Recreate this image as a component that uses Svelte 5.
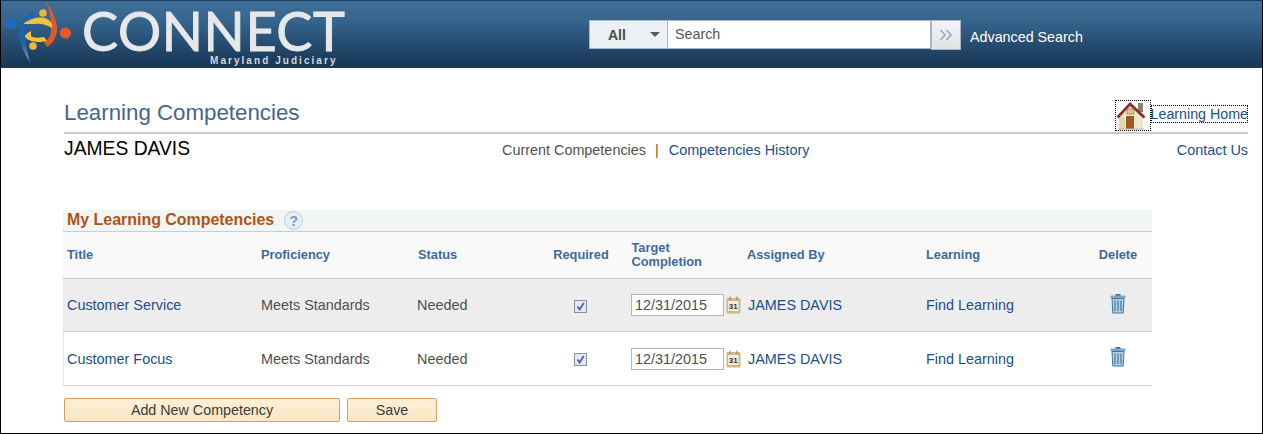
<script>
  const rows = [
    { title: 'Customer Service', tone: 'odd' },
    { title: 'Customer Focus', tone: 'even' }
  ];
</script>

<div class="frame">
  <header class="banner">
    <div class="logo">
      <svg class="mark" width="74" height="64" viewBox="1 1 74 64" aria-hidden="true">
        <defs>
          <linearGradient id="swoosh" x1="0" y1="0" x2="0" y2="1">
            <stop offset="0" stop-color="#1f66b5"/>
            <stop offset="0.65" stop-color="#1f5fa6"/>
            <stop offset="1" stop-color="#8fa6bc"/>
          </linearGradient>
        </defs>
        <circle cx="11" cy="23.5" r="6" fill="#2468b8"/>
        <path d="M30 62 C22 50 17 38 19 28 C22 20 27 14 33 11 L34 17 C30 19 27 24 26 30 C25 42 27 52 30 62Z" fill="url(#swoosh)"/>
        <path d="M46 2 C54 12 58 24 57 32 C55 40 52 44 47 47 L44 42 C48 40 50 37 51 32 C52 22 50 12 46 2Z" fill="#e0592a"/>
        <circle cx="65.5" cy="33" r="5.5" fill="#e35a26"/>
        <circle cx="43" cy="13" r="3.8" fill="#f0b53f"/>
        <path d="M23 24 C30 18 40 16 47 19 C51 21 53 24 52 28 C47 25 41 23 35 24 C31 24 27 24 23 24Z" fill="#f3c23a"/>
        <circle cx="33" cy="46" r="3.8" fill="#f0b53f"/>
        <path d="M31 31 C27 33 25 35 25 37 C28 41 34 42 40 42 L47 41 L44 37 C38 38 33 38 31 36Z" fill="#f3c23a"/>
      </svg>
      <div class="wordmark">
        <span class="connect">CONNECT</span>
        <span class="judiciary">Maryland Judiciary</span>
      </div>
    </div>
    <div class="search">
      <div class="scope"><b>All</b><i class="caret"></i></div>
      <div class="field">Search</div>
      <div class="go">
        <svg width="14" height="12" viewBox="0 0 14 12" aria-hidden="true"><path d="M1.5 1 L6 6 L1.5 11 M7.5 1 L12 6 L7.5 11" fill="none" stroke="#8fa9c4" stroke-width="1.5"/></svg>
      </div>
      <a class="advanced" href="#a">Advanced Search</a>
    </div>
  </header>

  <main class="page">
    <div class="heading">
      <h1>Learning Competencies</h1>
      <div class="home">
        <span class="focus icon">
          <svg width="34" height="29" viewBox="0 0 34 29" aria-hidden="true">
            <rect x="22" y="2" width="5" height="9" fill="#8c8270"/>
            <path d="M3 15 L14 4 L27 15 V28 H3Z" fill="#efe6cf"/>
            <path d="M3 16 H9 V28 H3Z" fill="#e2d6b8"/>
            <path d="M0.5 15.5 L14 1 L29.5 15.5 L27.5 17.5 L14 5 L2.5 17.5Z" fill="#8f2f27"/>
            <rect x="10" y="15" width="8" height="13" fill="#9b5a1e"/>
            <rect x="11" y="8" width="7" height="5" fill="#dcc888" stroke="#8a7a50" stroke-width=".7"/>
            <rect x="2" y="27.5" width="26" height="1" fill="#b9ad92"/>
          </svg>
        </span>
        <a class="focus" href="#h">Learning Home</a>
      </div>
    </div>

    <div class="subnav">
      <div class="person">JAMES DAVIS</div>
      <nav>
        <span class="current">Current Competencies</span>
        <span class="sep">|</span>
        <a href="#c">Competencies History</a>
      </nav>
      <a class="contact" href="#u">Contact Us</a>
    </div>

    <section class="grid">
      <div class="caption">
        <h2>My Learning Competencies</h2>
        <span class="help">?</span>
      </div>
      <table>
        <colgroup>
          <col class="c1" /><col class="c2" /><col class="c3" /><col class="c4" />
          <col class="c5" /><col class="c6" /><col class="c7" /><col class="c8" />
        </colgroup>
        <thead>
          <tr>
            <th>Title</th>
            <th>Proficiency</th>
            <th class="statush">Status</th>
            <th class="center req">Required</th>
            <th class="target">Target<br />Completion</th>
            <th>Assigned By</th>
            <th>Learning</th>
            <th class="center del">Delete</th>
          </tr>
        </thead>
        <tbody>
          {#each rows as row}
            <tr class={row.tone}>
              <td><a href="#t">{row.title}</a></td>
              <td>Meets Standards</td>
              <td>Needed</td>
              <td class="center reqcell"><span class="check">
                <svg width="9" height="9" viewBox="0 0 9 9" aria-hidden="true"><path d="M1.5 4.5 L3.6 7.5 L7.8 1" fill="none" stroke="#4a63a8" stroke-width="1.8"/></svg>
              </span></td>
              <td>
                <div class="date">
                  <span class="dateinput">12/31/2015</span>
                  <svg width="15" height="18" viewBox="0 0 15 18" aria-hidden="true">
                    <rect x="0.5" y="2" width="14" height="15.5" rx="1" fill="#cdb98a"/>
                    <rect x="2" y="5" width="10.5" height="10" fill="#f6efd8"/>
                    <path d="M4 0.5 V4 M11 0.5 V4" stroke="#8e7d55" stroke-width="1"/>
                    <text x="7.2" y="13" text-anchor="middle" class="calnum">31</text>
                  </svg>
                </div>
              </td>
              <td class="assigned"><a href="#b">JAMES DAVIS</a></td>
              <td><a href="#l">Find Learning</a></td>
              <td class="center del">
                <svg class="trash" width="16" height="21" viewBox="0 0 16 21" aria-hidden="true">
                  <path d="M5.5 1 H10.5 V3 H5.5Z" fill="#3a6f9c"/>
                  <rect x="0.5" y="2.5" width="15" height="3" rx="1" fill="#7ea6c6"/>
                  <path d="M2 5.5 H14 L13.2 20 H2.8Z" fill="#b4cee2" stroke="#3f77a4" stroke-width="1"/>
                  <path d="M5 7.5 V18 M8 7.5 V18 M11 7.5 V18" stroke="#4a80ab" stroke-width="1.3"/>
                </svg>
              </td>
            </tr>
          {/each}
        </tbody>
      </table>
    </section>

    <div class="actions">
      <button class="wide">Add New Competency</button>
      <button class="save">Save</button>
    </div>
  </main>
</div>

<style>
  :global(body) {
    margin: 0;
    background: #fff;
  }
  .frame {
    width: 1263px;
    height: 434px;
    box-sizing: border-box;
    border-left: 1px solid #000;
    border-right: 1px solid #000;
    border-bottom: 1px solid #000;
    font-family: "Liberation Sans", Arial, sans-serif;
    font-size: 14.4px;
    color: #4f4f4f;
  }
  a {
    color: #1a4f8c;
    text-decoration: none;
  }
  .banner {
    height: 68px;
    box-sizing: border-box;
    border-top: 1px solid #1c3d5c;
    background: linear-gradient(#3f6f98, #35648c 30%, #1b3b5b 90%, #193755);
    display: flex;
  }
  .logo {
    display: flex;
    width: 588px;
    flex: none;
  }
  .mark {
    flex: none;
  }
  .wordmark {
    position: relative;
    margin-left: 7px;
    width: 270px;
  }
  .connect {
    display: block;
    font-family: Lato, "Open Sans", sans-serif;
    font-weight: 400;
    font-size: 54px;
    line-height: 60px;
    letter-spacing: 0.6px;
    color: #e6e8ea;
    -webkit-text-stroke: 0.9px #e6e8ea;
    white-space: nowrap;
  }
  .judiciary {
    position: absolute;
    left: 128px;
    top: 53px;
    font-size: 10px;
    line-height: 13px;
    font-weight: bold;
    letter-spacing: 2.05px;
    color: #d5d8da;
    white-space: nowrap;
  }
  .search {
    display: flex;
    align-items: flex-start;
    padding-top: 19px;
  }
  .scope {
    width: 79px;
    height: 29px;
    box-sizing: border-box;
    background: #edf1f4;
    border: 1px solid #aab6c6;
    display: flex;
    align-items: center;
    padding-left: 18px;
    color: #4a4a4a;
    font-size: 14px;
  }
  .caret {
    width: 0;
    height: 0;
    border: 5px solid transparent;
    border-top: 5px solid #5a5a5a;
    border-bottom: 0;
    margin-left: 24px;
  }
  .field {
    width: 263px;
    height: 29px;
    box-sizing: border-box;
    background: #fff;
    border: 1px solid #aab6c6;
    border-left: 0;
    padding-left: 7px;
    line-height: 26px;
    color: #555;
    font-size: 14.3px;
  }
  .go {
    width: 30px;
    height: 30px;
    box-sizing: border-box;
    border: 1px solid #aab6c6;
    background: linear-gradient(#f2f4f6, #dfe3e6);
    display: flex;
    align-items: center;
    justify-content: center;
  }
  .advanced {
    color: #fff;
    margin-left: 9px;
    margin-top: 8px;
    font-size: 14.3px;
    line-height: 18px;
  }
  .page {
    padding: 0 14px 0 62px;
  }
  .heading {
    height: 66px;
    box-sizing: border-box;
    margin-left: 1px;
    border-bottom: 2px solid #cccccc;
    display: flex;
    justify-content: space-between;
    align-items: flex-end;
  }
  h1 {
    margin: 0 0 6px;
    font-weight: normal;
    font-size: 22.3px;
    line-height: 26px;
    color: #46658c;
  }
  .home {
    display: flex;
    align-items: flex-start;
    margin-bottom: 1px;
  }
  .focus {
    outline: 1px dotted #000;
    outline-offset: -1px;
  }
  .icon {
    width: 36px;
    height: 31px;
    display: flex;
    align-items: center;
    justify-content: center;
    box-sizing: border-box;
  }
  .home a {
    line-height: 18px;
    margin-top: 5px;
    font-size: 14.25px;
  }
  .subnav {
    position: relative;
    height: 76px;
    display: flex;
    justify-content: space-between;
    align-items: flex-start;
  }
  .person {
    font-size: 19.3px;
    line-height: 22px;
    color: #000;
    margin: 4px 0 0 1px;
  }
  nav {
    position: absolute;
    left: 439px;
    top: 8px;
    line-height: 16px;
    white-space: nowrap;
  }
  .sep {
    margin: 0 6px 0 5px;
    color: #7a5a30;
  }
  .contact {
    margin-top: 8px;
    line-height: 16px;
  }
  .grid {
    width: 1089px;
  }
  .caption {
    height: 22px;
    box-sizing: border-box;
    background: #f1f5f5;
    border-bottom: 1px solid #c9cdd0;
    display: flex;
    align-items: center;
    padding-left: 4px;
    gap: 10px;
  }
  h2 {
    margin: 0 0 2px;
    font-size: 15.95px;
    line-height: 20px;
    color: #ad5416;
  }
  .help {
    width: 19px;
    height: 19px;
    box-sizing: border-box;
    border-radius: 50%;
    border: 1px solid #b8cde2;
    background: #e6eef6;
    color: #7a9cc0;
    font-size: 14px;
    font-weight: bold;
    text-align: center;
    line-height: 18px;
  }
  table {
    border-collapse: collapse;
    table-layout: fixed;
    width: 1089px;
  }
  .c1 { width: 194px; }
  .c2 { width: 156px; }
  .c3 { width: 114px; }
  .c4 { width: 100px; }
  .c5 { width: 116px; }
  .c6 { width: 179px; }
  .c7 { width: 156px; }
  .c8 { width: 74px; }
  th, td {
    padding: 0 0 0 4px;
    text-align: left;
    white-space: nowrap;
  }
  th {
    height: 46px;
    background: #f9f9f9;
    color: #3d6a9c;
    font-size: 12.8px;
    line-height: 14px;
    border-bottom: 1px solid #c9c9c9;
  }
  th.statush { padding-left: 5px; }
  th.target { padding-left: 4.5px; }
  td {
    border-bottom: 1px solid #cfcfcf;
    line-height: 16px;
  }
  tr.odd td { background: #ededed; height: 52px; }
  tr.even td { background: #fff; height: 53px; }
  tr.even td:first-child { box-shadow: inset 1px 0 #e4e4e4; }
  .center { text-align: center; }
  .req { padding-left: 8px; }
  .reqcell { padding-left: 7px; }
  .del { padding-left: 6px; }
  .assigned { padding-left: 5px; }
  .check {
    display: inline-flex;
    width: 13px;
    height: 13px;
    box-sizing: border-box;
    border: 1px solid #8a8f96;
    background: #e4e8f0;
    align-items: center;
    justify-content: center;
    vertical-align: middle;
  }
  .date {
    display: flex;
    align-items: center;
    gap: 2px;
  }
  .dateinput {
    width: 93px;
    height: 22px;
    box-sizing: border-box;
    border: 1px solid #b5b5b5;
    background: #fff;
    padding-left: 3px;
    line-height: 20px;
    color: #4f4f4f;
  }
  .calnum {
    font: bold 8px "Liberation Sans", Arial, sans-serif;
    fill: #333;
  }
  .trash {
    display: inline-block;
    vertical-align: middle;
    position: relative;
    top: -2px;
  }
  .actions {
    display: flex;
    gap: 7px;
    margin-top: 12px;
    margin-left: 1px;
  }
  button {
    height: 24px;
    box-sizing: border-box;
    border: 1px solid #dc9d66;
    border-radius: 2px;
    background: linear-gradient(#fdf0d6, #f9e5c4);
    font: 14.3px/20px "Liberation Sans", Arial, sans-serif;
    color: #3b3b3b;
    padding: 0;
  }
  .wide { width: 276px; }
  .save { width: 90px; }
</style>
